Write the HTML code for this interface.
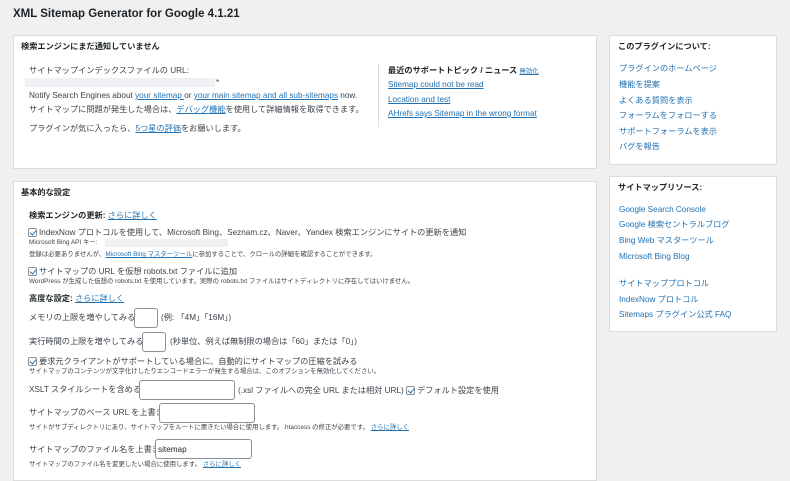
<!DOCTYPE html>
<html><head><meta charset="utf-8"><style>
*{margin:0;padding:0;box-sizing:border-box}
body{width:790px;height:474px;overflow:hidden;background:#f0f0f1;font-family:"Liberation Sans","Noto Sans CJK JP",sans-serif;color:#3c434a;font-size:8.2px;position:relative}
.box{position:absolute;background:#fff;border:1px solid #dcdcde}
.t{position:absolute;white-space:nowrap;line-height:1}
a{color:#2271b1;text-decoration:underline}
.nl{color:#2271b1;text-decoration:none}
b{color:#1d2327}
.s{font-size:6.4px}
.cb{display:inline-block;width:9px;height:9px;border:1px solid #8c8f94;border-radius:2px;vertical-align:-2px;margin-right:2px;position:relative;background:#fff}
.cb:after{content:"";position:absolute;left:2px;top:0px;width:3px;height:5px;border:solid #2271b1;border-width:0 1.5px 1.5px 0;transform:rotate(40deg)}
.in{position:absolute;background:#fff;border:1px solid #8c8f94;border-radius:3px}
</style></head><body>
<div class="t" style="left:13px;top:9px;font-size:11.5px;font-weight:bold;color:#1d2327">XML Sitemap Generator for Google 4.1.21</div>

<div class="box" style="left:13px;top:35px;width:584px;height:134px"></div>
<div class="t" style="left:21px;top:43px;font-weight:bold;color:#1d2327">検索エンジンにまだ通知していません</div>
<div class="t" style="left:29px;top:67px">サイトマップインデックスファイルの URL:</div>
<div style="position:absolute;left:25px;top:78px;width:190px;height:9px;background:#eef0f4"></div>
<div class="t" style="left:216px;top:79px">*</div>
<div class="t" style="left:29px;top:92px">Notify Search Engines about <a>your sitemap </a>or <a>your main sitemap and all sub-sitemaps</a> now.</div>
<div class="t" style="left:29px;top:106px">サイトマップに問題が発生した場合は、<a>デバッグ機能</a>を使用して詳細情報を取得できます。</div>
<div class="t" style="left:29px;top:125px">プラグインが気に入ったら、<a>5つ星の評価</a>をお願いします。</div>
<div style="position:absolute;left:378px;top:64px;width:1px;height:63px;background:#dcdcde"></div>
<div class="t" style="left:388px;top:67px;font-weight:bold;color:#1d2327">最近のサポートトピック / ニュース <a class="s" style="font-weight:normal">無効化</a></div>
<div class="t" style="left:388px;top:81px"><a>Sitemap could not be read</a></div>
<div class="t" style="left:388px;top:96px"><a>Location and test</a></div>
<div class="t" style="left:388px;top:110px"><a>AHrefs says Sitemap in the wrong format</a></div>

<div class="box" style="left:609px;top:35px;width:168px;height:130px"></div>
<div class="t" style="left:618px;top:43px;font-weight:bold;color:#1d2327">このプラグインについて:</div>
<div class="t nl" style="left:619px;top:65px">プラグインのホームページ</div>
<div class="t nl" style="left:619px;top:81px">機能を提案</div>
<div class="t nl" style="left:619px;top:97px">よくある質問を表示</div>
<div class="t nl" style="left:619px;top:112px">フォーラムをフォローする</div>
<div class="t nl" style="left:619px;top:128px">サポートフォーラムを表示</div>
<div class="t nl" style="left:619px;top:143px">バグを報告</div>

<div class="box" style="left:609px;top:176px;width:168px;height:156px"></div>
<div class="t" style="left:618px;top:184px;font-weight:bold;color:#1d2327">サイトマップリソース:</div>
<div class="t nl" style="left:619px;top:206px">Google Search Console</div>
<div class="t nl" style="left:619px;top:221px">Google 検索セントラルブログ</div>
<div class="t nl" style="left:619px;top:237px">Bing Web マスターツール</div>
<div class="t nl" style="left:619px;top:253px">Microsoft Bing Blog</div>
<div class="t nl" style="left:619px;top:280px">サイトマッププロトコル</div>
<div class="t nl" style="left:619px;top:296px">IndexNow プロトコル</div>
<div class="t nl" style="left:619px;top:311px">Sitemaps プラグイン公式 FAQ</div>

<div class="box" style="left:13px;top:181px;width:584px;height:300px"></div>
<div class="t" style="left:21px;top:189px;font-weight:bold;color:#1d2327">基本的な設定</div>
<div class="t" style="left:29px;top:212px;font-weight:bold;color:#1d2327">検索エンジンの更新: <a style="font-weight:normal">さらに詳しく</a></div>
<div class="t" style="left:28px;top:228px"><span class="cb"></span>IndexNow プロトコルを使用して、Microsoft Bing、Seznam.cz、Naver、Yandex 検索エンジンにサイトの更新を通知</div>
<div class="t s" style="left:29px;top:240px">Microsoft Bing API キー:</div>
<div style="position:absolute;left:105px;top:239px;width:123px;height:8px;background:#f0f0f2"></div>
<div class="t s" style="left:29px;top:252px">登録は必要ありませんが、<a>Microsoft Bing マスターツール</a>に参加することで、クロールの詳細を確認することができます。</div>
<div class="t" style="left:28px;top:267px"><span class="cb"></span>サイトマップの URL を仮想 robots.txt ファイルに追加</div>
<div class="t s" style="left:29px;top:279px">WordPress が生成した仮想の robots.txt を使用しています。実際の robots.txt ファイルはサイトディレクトリに存在してはいけません。</div>
<div class="t" style="left:29px;top:295px;font-weight:bold;color:#1d2327">高度な設定: <a style="font-weight:normal">さらに詳しく</a></div>
<div class="t" style="left:29px;top:314px">メモリの上限を増やしてみる:</div>
<div class="in" style="left:134px;top:308px;width:24px;height:20px"></div>
<div class="t" style="left:161px;top:314px">(例: 「4M」「16M」)</div>
<div class="t" style="left:29px;top:338px">実行時間の上限を増やしてみる:</div>
<div class="in" style="left:142px;top:332px;width:24px;height:20px"></div>
<div class="t" style="left:170px;top:338px">(秒単位、例えば無制限の場合は「60」または「0」)</div>
<div class="t" style="left:28px;top:357px"><span class="cb"></span>要求元クライアントがサポートしている場合に、自動的にサイトマップの圧縮を試みる</div>
<div class="t s" style="left:29px;top:369px">サイトマップのコンテンツが文字化けしたりエンコードエラーが発生する場合は、このオプションを無効化してください。</div>
<div class="t" style="left:29px;top:386px">XSLT スタイルシートを含める:</div>
<div class="in" style="left:139px;top:380px;width:96px;height:20px"></div>
<div class="t" style="left:238px;top:386px">(.xsl ファイルへの完全 URL または相対 URL) <span class="cb"></span>デフォルト設定を使用</div>
<div class="t" style="left:29px;top:409px">サイトマップのベース URL を上書き:</div>
<div class="in" style="left:159px;top:403px;width:96px;height:20px"></div>
<div class="t s" style="left:29px;top:425px">サイトがサブディレクトリにあり、サイトマップをルートに置きたい場合に使用します。.htaccess の修正が必要です。 <a>さらに詳しく</a></div>
<div class="t" style="left:29px;top:446px">サイトマップのファイル名を上書き:</div>
<div class="in" style="left:155px;top:439px;width:97px;height:20px"></div>
<div class="t" style="left:158px;top:446px;color:#1d2327">sitemap</div>
<div class="t s" style="left:29px;top:462px">サイトマップのファイル名を変更したい場合に使用します。 <a>さらに詳しく</a></div>
</body></html>
